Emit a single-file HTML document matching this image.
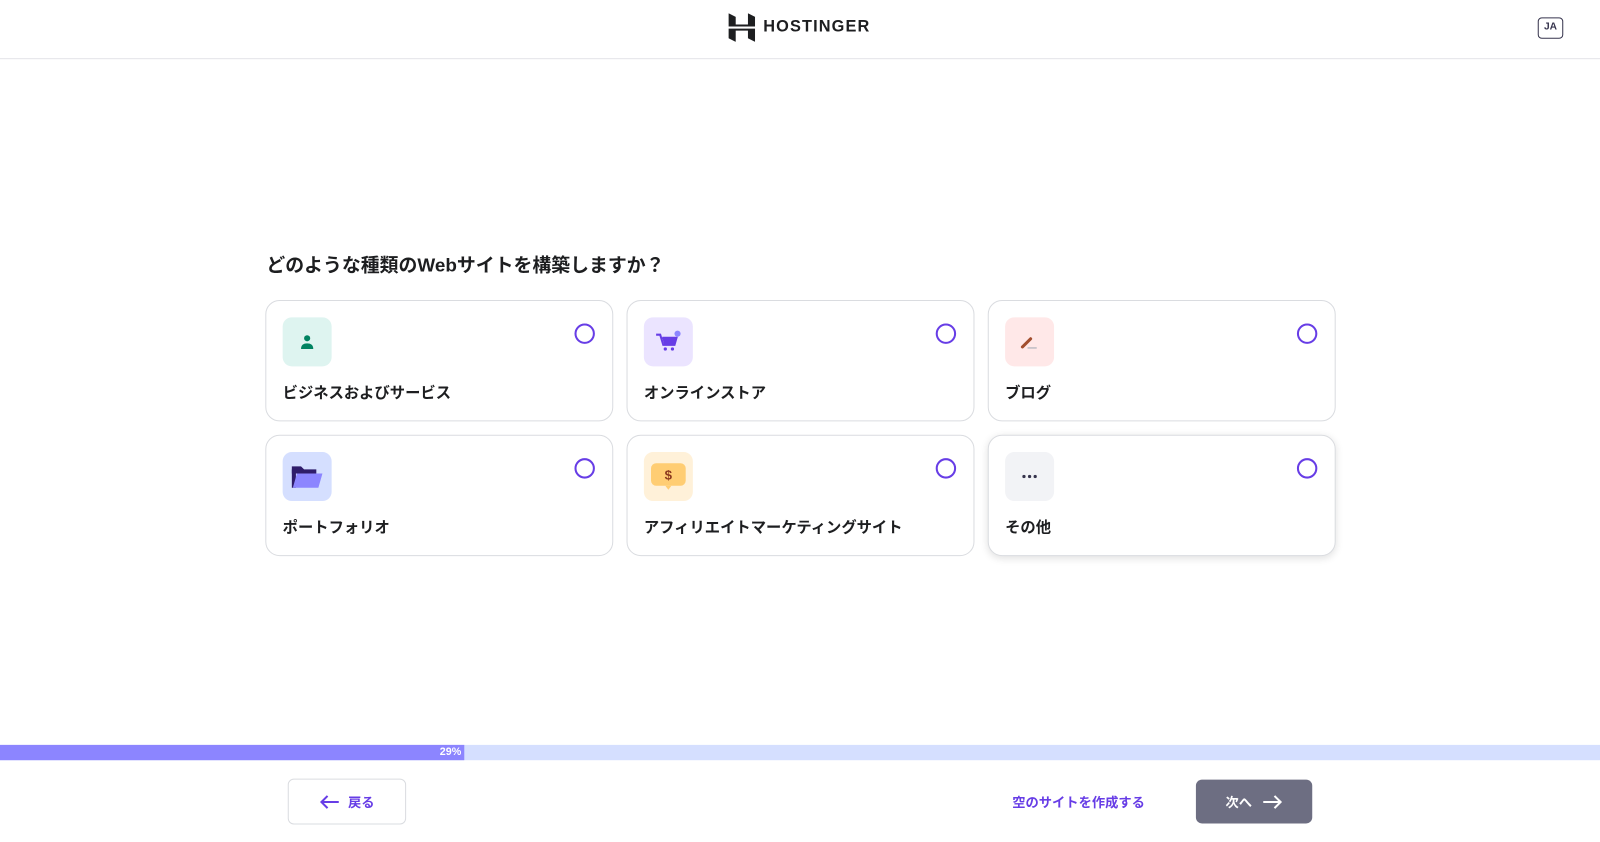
<!DOCTYPE html>
<html><head><meta charset="utf-8"><style>
*{box-sizing:border-box;margin:0;padding:0}
body{width:1600px;height:842px;background:#fff;font-family:"Liberation Sans","Noto Sans CJK JP",sans-serif;color:#2f1c6a;position:relative;overflow:hidden}
.wrap{position:absolute;left:0;top:0;width:1568px;height:825px;transform:scale(1.0204);transform-origin:0 0}
.hdr{position:absolute;left:0;top:0;width:1568px;height:58px;border-bottom:1px solid #e3e3e8}
.logo{position:absolute;left:714px;top:13px;display:flex;align-items:center}
.logo span{font-weight:700;font-size:16px;letter-spacing:1.1px;color:#1d1e20;margin-left:8px}
.ja{position:absolute;left:1507px;top:17px;width:25px;height:21px;border:1.5px solid #36344d;border-radius:4px;font-size:10px;font-weight:700;color:#36344d;text-align:center;line-height:18px}
h1{position:absolute;left:261px;top:246px;font-size:18.5px;font-weight:700;color:#1d1e20}
.card{position:absolute;width:341px;height:119px;border:1px solid #dadce0;border-radius:14px;background:#fff}
.card.sh{box-shadow:0 2px 8px rgba(0,0,0,.12)}
.ic{position:absolute;left:16px;top:16px;width:48px;height:48px;border-radius:9px;display:flex;align-items:center;justify-content:center}
.rd{position:absolute;left:302px;top:22px;width:20px;height:20px;border:2px solid #673de6;border-radius:50%}
.lb{position:absolute;left:16px;top:79px;font-size:15px;font-weight:700;color:#1d1e20}
.bar{position:absolute;left:0;top:730px;width:1568px;height:15px;background:#d5dfff}
.fill{position:absolute;left:0;top:0;width:455px;height:15px;background:#8c85ff;color:#fff;font-size:10.5px;font-weight:700;text-align:right;padding-right:3px;line-height:15px}
.back{position:absolute;left:282px;top:763px;width:116px;height:45px;border:1px solid #dadce0;border-radius:6px;display:flex;align-items:center;justify-content:center;gap:8px;color:#673de6;font-size:13px;font-weight:700}
.empty{position:absolute;left:992px;top:776px;color:#673de6;font-size:13px;font-weight:700}
.next{position:absolute;left:1172px;top:764px;width:114px;height:43px;border-radius:6px;background:#6d6e82;display:flex;align-items:center;justify-content:center;gap:10px;color:#fff;font-size:13px;font-weight:700}
</style></head><body><div class="wrap">
<div class="hdr">
<div class="logo"><svg width="26" height="28" viewBox="0 0 26 28"><path d="M0 0l7 3.5v7.5l12 0V0l7 3.5v9.5H0z M0 15h26v13l-7-3.5v-7.5H7v11l-7-3.5z" fill="#1d1e20"/></svg><span>HOSTINGER</span></div>
<div class="ja">JA</div>
</div>
<h1>どのような種類のWebサイトを構築しますか？</h1>

<div class="card" style="left:260px;top:294px"><div class="ic" style="background:#def4f0"><svg width="16" height="16" viewBox="0 0 16 16"><circle cx="8" cy="4.5" r="3" fill="#008361"/><path d="M2 15c0-4 2.5-5.5 6-5.5s6 1.5 6 5.5z" fill="#008361"/></svg></div><div class="rd"></div><div class="lb">ビジネスおよびサービス</div></div>
<div class="card" style="left:614px;top:294px"><div class="ic" style="background:#ebe4ff"><svg width="26" height="24" viewBox="0 0 26 24"><path d="M1 5h4l3 10h11l2-7H7" fill="none" stroke="#673de6" stroke-width="2"/><path d="M7 8h14l-2 7H9z" fill="#673de6"/><circle cx="10" cy="19" r="1.6" fill="#673de6"/><circle cx="17" cy="19" r="1.6" fill="#673de6"/><circle cx="22" cy="4" r="3" fill="#8c85ff"/></svg></div><div class="rd"></div><div class="lb">オンラインストア</div></div>
<div class="card" style="left:968px;top:294px"><div class="ic" style="background:#ffe8e8"><svg width="22" height="22" viewBox="0 0 22 22"><path d="M4 16l8-8" stroke="#a24e2e" stroke-width="3" stroke-linecap="round"/><path d="M9 17h9" stroke="#b8b8c0" stroke-width="1.3"/></svg></div><div class="rd"></div><div class="lb">ブログ</div></div>

<div class="card" style="left:260px;top:426px"><div class="ic" style="background:#d5dfff"><svg width="32" height="24" viewBox="0 0 32 24"><path d="M1 2h9l3 3h12v4H1z" fill="#2f1c6a"/><path d="M1 5h4v18H1z" fill="#2f1c6a"/><path d="M6 9h25l-4 14H2z" fill="#8c85ff"/></svg></div><div class="rd"></div><div class="lb">ポートフォリオ</div></div>
<div class="card" style="left:614px;top:426px"><div class="ic" style="background:#fff1d9"><svg width="36" height="30" viewBox="0 0 36 30"><rect x="1" y="2" width="34" height="22" rx="5" fill="#ffcd73"/><path d="M15 24l3 4 3-4z" fill="#ffcd73"/><text x="18" y="18" text-anchor="middle" font-family="Liberation Sans" font-weight="700" font-size="13" fill="#8c3a1f">$</text></svg></div><div class="rd"></div><div class="lb">アフィリエイトマーケティングサイト</div></div>
<div class="card sh" style="left:968px;top:426px"><div class="ic" style="background:#f2f3f6"><svg width="16" height="4" viewBox="0 0 16 4"><circle cx="2.5" cy="2" r="1.6" fill="#36344d"/><circle cx="8" cy="2" r="1.6" fill="#36344d"/><circle cx="13.5" cy="2" r="1.6" fill="#36344d"/></svg></div><div class="rd"></div><div class="lb">その他</div></div>

<div class="bar"><div class="fill">29%</div></div>
<div class="back"><svg width="20" height="16" viewBox="0 0 20 16"><path d="M19 8H2M8 2L2 8l6 6" fill="none" stroke="#673de6" stroke-width="2"/></svg>戻る</div>
<div class="empty">空のサイトを作成する</div>
<div class="next">次へ<svg width="20" height="16" viewBox="0 0 20 16"><path d="M1 8h17M12 2l6 6-6 6" fill="none" stroke="#fff" stroke-width="2"/></svg></div>
</div></body></html>
